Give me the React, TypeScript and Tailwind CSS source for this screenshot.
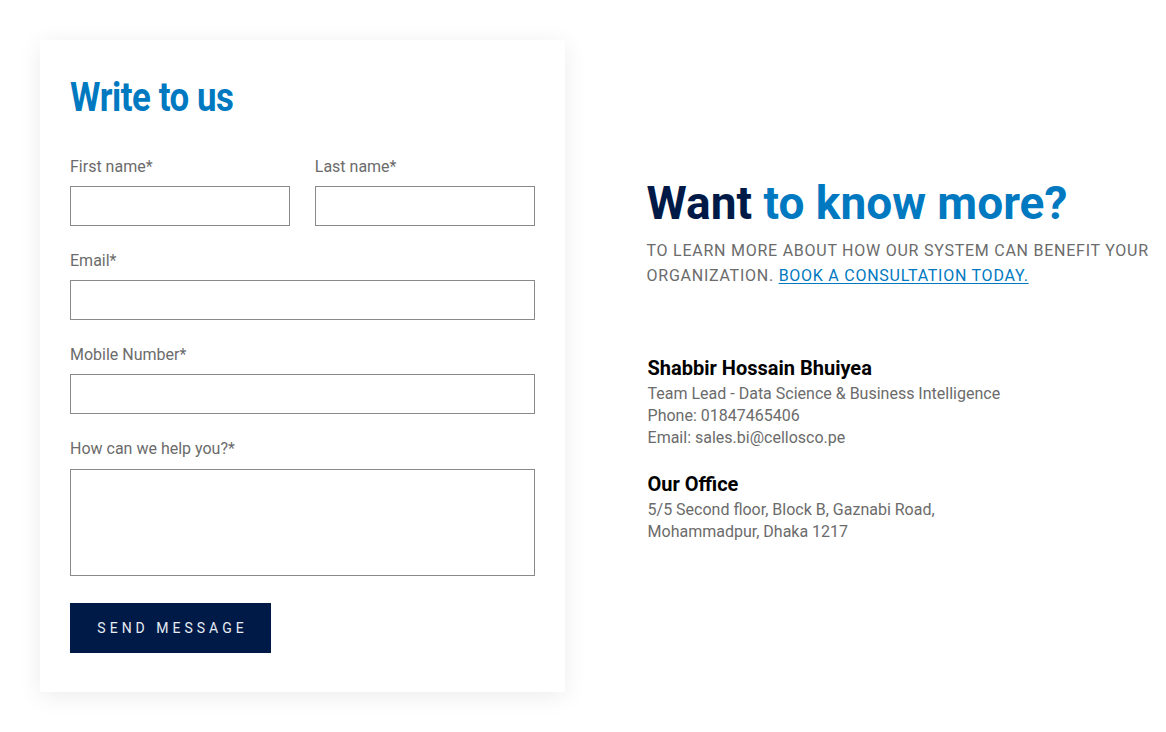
import React from 'react';

const Field: React.FC<{ label: string; className?: string; area?: boolean }> = ({ label, className, area }) => {
  return (
    <label className={`flex flex-col ${className ?? ''}`}>
      <span className={`text-[16px] leading-[20px] text-[#6b6b6b] ${area ? 'mb-[10px]' : 'mb-[9px]'}`}>{label}</span>
      {area ? (
        <textarea className="h-[107px] w-full border border-[#8a8a8a] resize-none outline-none" />
      ) : (
        <input className="h-[40px] w-full border border-[#8a8a8a] outline-none" />
      )}
    </label>
  );
};

export default function App() {
  return (
    <div className="min-h-[732px] w-[1166px] bg-white font-['Roboto',sans-serif] flex items-start pt-[40px] pl-[40px]">
      <div className="w-[525px] h-[652px] bg-white rounded-[3px] shadow-[0_4px_24px_rgba(0,0,0,0.08)] px-[30px] pt-[36px]">
        <h2 className="text-[40px] leading-[44px] font-bold text-[#0079c1] tracking-[-0.5px] scale-x-[0.87] origin-left">
          Write to us
        </h2>
        <form className="mt-[37px] flex flex-col gap-[25px]" onSubmit={(e) => e.preventDefault()}>
          <div className="grid grid-cols-2 gap-[25px]">
            <Field label="First name*" />
            <Field label="Last name*" />
          </div>
          <Field label="Email*" />
          <Field label="Mobile Number*" />
          <Field label="How can we help you?*" area />
          <div className="pt-[2px]">
            <button
              type="submit"
              className="w-[201px] h-[50px] bg-[#001a48] text-[#e8ecf3] text-[14px] tracking-[4px] pl-[4px] uppercase"
            >
              Send Message
            </button>
          </div>
        </form>
      </div>

      <div className="ml-[82px] pt-[136px] w-[520px]">
        <h1 className="text-[46px] leading-[54px] font-bold">
          <span className="text-[#001a48]">Want</span>{' '}
          <span className="text-[#0079c1]">to know more?</span>
        </h1>
        <p className="mt-[8px] text-[16px] leading-[25px] tracking-[0.75px] uppercase text-[#6b6b6b]">
          To learn more about how our system can benefit your organization.{' '}
          <a href="#" className="text-[#0079c1] underline underline-offset-2">
            Book a consultation today.
          </a>
        </p>

        <div className="mt-[68px] pl-[1px]">
          <h3 className="text-[20px] leading-[24px] font-bold text-black mb-[3px]">Shabbir Hossain Bhuiyea</h3>
          <div className="text-[16px] leading-[22px] text-[#6b6b6b]">
            <p>Team Lead - Data Science &amp; Business Intelligence</p>
            <p>Phone: 01847465406</p>
            <p>Email: sales.bi@cellosco.pe</p>
          </div>

          <h3 className="mt-[23px] mb-[3px] text-[20px] leading-[24px] font-bold text-black">Our Office</h3>
          <div className="text-[16px] leading-[22px] text-[#6b6b6b]">
            <p>5/5 Second floor, Block B, Gaznabi Road,</p>
            <p>Mohammadpur, Dhaka 1217</p>
          </div>
        </div>
      </div>
    </div>
  );
}
